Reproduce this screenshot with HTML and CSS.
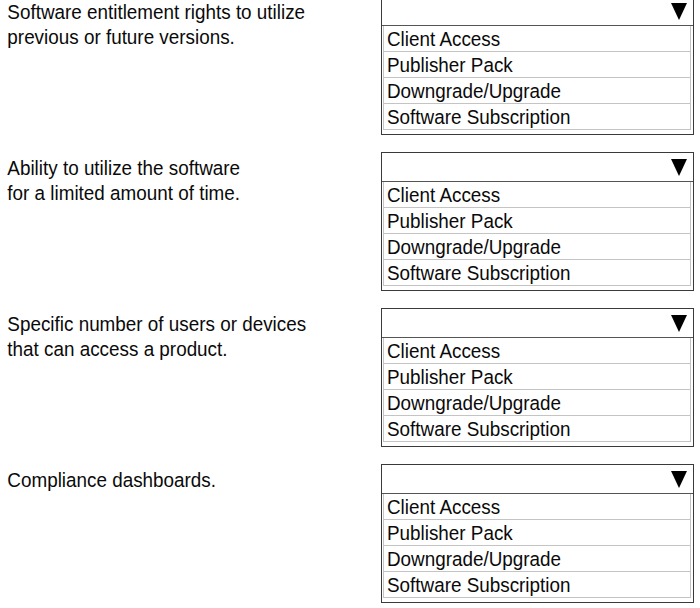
FILE: index.html
```html
<!DOCTYPE html>
<html lang="en">
<head>
    <meta charset="UTF-8">
    <meta name="viewport" content="width=device-width, initial-scale=1.0">
    <title>Licensing Terms</title>
    <link rel="stylesheet" href="styles.css">
</head>
<body>
    <div class="sheet">
        <div class="question">
            <p class="prompt">Software entitlement rights to utilize<br>previous or future versions.</p>
            <div class="dropdown">
                <div class="dropdown-head">
                    <svg class="arrow" width="16" height="17" viewBox="0 0 16 17"><polygon points="0,0 16,0 8,17" fill="#000"/></svg>
                </div>
                <ul class="options">
                    <li><span>Client Access</span></li>
                    <li><span>Publisher Pack</span></li>
                    <li><span>Downgrade/Upgrade</span></li>
                    <li><span>Software Subscription</span></li>
                </ul>
            </div>
        </div>
        <div class="question">
            <p class="prompt">Ability to utilize the software<br>for a limited amount of time.</p>
            <div class="dropdown">
                <div class="dropdown-head">
                    <svg class="arrow" width="16" height="17" viewBox="0 0 16 17"><polygon points="0,0 16,0 8,17" fill="#000"/></svg>
                </div>
                <ul class="options">
                    <li><span>Client Access</span></li>
                    <li><span>Publisher Pack</span></li>
                    <li><span>Downgrade/Upgrade</span></li>
                    <li><span>Software Subscription</span></li>
                </ul>
            </div>
        </div>
        <div class="question">
            <p class="prompt">Specific number of users or devices<br>that can access a product.</p>
            <div class="dropdown">
                <div class="dropdown-head">
                    <svg class="arrow" width="16" height="17" viewBox="0 0 16 17"><polygon points="0,0 16,0 8,17" fill="#000"/></svg>
                </div>
                <ul class="options">
                    <li><span>Client Access</span></li>
                    <li><span>Publisher Pack</span></li>
                    <li><span>Downgrade/Upgrade</span></li>
                    <li><span>Software Subscription</span></li>
                </ul>
            </div>
        </div>
        <div class="question">
            <p class="prompt">Compliance dashboards.</p>
            <div class="dropdown">
                <div class="dropdown-head">
                    <svg class="arrow" width="16" height="17" viewBox="0 0 16 17"><polygon points="0,0 16,0 8,17" fill="#000"/></svg>
                </div>
                <ul class="options">
                    <li><span>Client Access</span></li>
                    <li><span>Publisher Pack</span></li>
                    <li><span>Downgrade/Upgrade</span></li>
                    <li><span>Software Subscription</span></li>
                </ul>
            </div>
        </div>
    </div>
</body>
</html>
```

FILE: styles.css
```css
body {
    font-family: "Liberation Sans", Arial, sans-serif;
    margin: 0;
    background-color: #fff;
    color: #0a0a0a;
}
.sheet {
    margin-top: -4px;
}
.question {
    display: flex;
    justify-content: space-between;
    margin-bottom: 17px;
}
/* the source text is a little narrow, so squeeze it sideways */
.prompt {
    margin: 0;
    padding: 3px 0 0 8px;
    font-size: 20.5px;
    line-height: 25px;
    white-space: nowrap;
    transform: scaleX(0.92);
    transform-origin: left top;
}
.dropdown {
    width: 311px;
    margin-right: 6px;
    border: 1px solid #3a3a3a;
}
.dropdown-head {
    height: 28px;
    display: flex;
    justify-content: flex-end;
    align-items: center;
    padding-right: 6px;
    border-bottom: 1px solid #555;
}
.options {
    list-style: none;
    margin: 0;
    padding: 0 2px 4px 1px;
}
.options li {
    height: 25px;
    line-height: 25px;
    padding-left: 3px;
    font-size: 20.5px;
    border: 1px solid #c4c4c4;
    border-top: none;
    white-space: nowrap;
}
.options li span {
    display: inline-block;
    transform: scaleX(0.92);
    transform-origin: left center;
}
```
